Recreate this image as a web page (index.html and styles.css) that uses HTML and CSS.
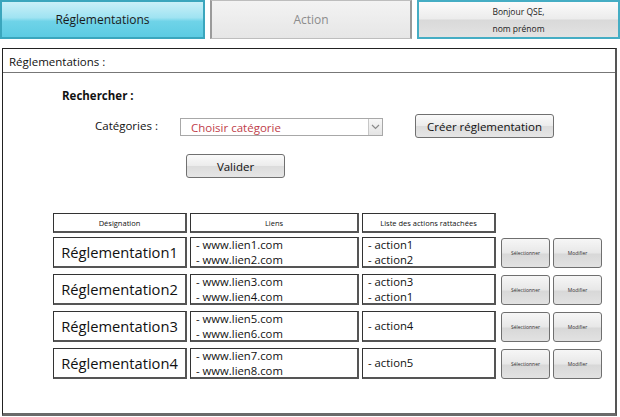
FILE: index.html
```html
<!DOCTYPE html>
<html lang="fr">
<head>
<meta charset="utf-8">
<link rel="stylesheet" href="styles.css">
</head>
<body>
<nav class="tabs">
  <div class="tab tab-active">Réglementations</div>
  <div class="tab tab-off">Action</div>
  <div class="tab tab-user">Bonjour QSE,<br>nom prénom</div>
</nav>
<main class="panel">
  <div class="panel-title">Réglementations :</div>
  <section class="search">
    <div class="search-title">Rechercher :</div>
    <div class="cat-row">
      <span class="cat-label">Catégories :</span>
      <div class="select">
        <span class="select-text">Choisir catégorie</span>
        <span class="select-arrow"><svg width="9" height="6" viewBox="0 0 9 6"><path d="M1 1 L4.5 4.5 L8 1" fill="none" stroke="#8a8a8a" stroke-width="1.2"/></svg></span>
      </div>
      <div class="btn btn-create">Créer réglementation</div>
    </div>
    <div class="btn btn-valider">Valider</div>
  </section>
  <section class="table">
    <div class="row head">
      <div class="cell c1">Désignation</div>
      <div class="cell c2">Liens</div>
      <div class="cell c3">Liste des actions rattachées</div>
    </div>
    <div class="row">
      <div class="cell c1 name">Réglementation1</div>
      <div class="cell c2 list"><span>- www.lien1.com</span><span>- www.lien2.com</span></div>
      <div class="cell c3 list"><span>- action1</span><span>- action2</span></div>
      <div class="sbtn first">Sélectionner</div><div class="sbtn">Modifier</div>
    </div>
    <div class="row">
      <div class="cell c1 name">Réglementation2</div>
      <div class="cell c2 list"><span>- www.lien3.com</span><span>- www.lien4.com</span></div>
      <div class="cell c3 list"><span>- action3</span><span>- action1</span></div>
      <div class="sbtn first">Sélectionner</div><div class="sbtn">Modifier</div>
    </div>
    <div class="row">
      <div class="cell c1 name">Réglementation3</div>
      <div class="cell c2 list"><span>- www.lien5.com</span><span>- www.lien6.com</span></div>
      <div class="cell c3 list"><span>- action4</span></div>
      <div class="sbtn first">Sélectionner</div><div class="sbtn">Modifier</div>
    </div>
    <div class="row">
      <div class="cell c1 name">Réglementation4</div>
      <div class="cell c2 list"><span>- www.lien7.com</span><span>- www.lien8.com</span></div>
      <div class="cell c3 list"><span>- action5</span></div>
      <div class="sbtn first">Sélectionner</div><div class="sbtn">Modifier</div>
    </div>
  </section>
</main>
</body>
</html>
```

FILE: styles.css
```css
* { box-sizing: border-box; }
html, body { margin: 0; padding: 0; background: #fff; }
body {
  font-family: "Open Sans", "DejaVu Sans", sans-serif;
  color: #111;
  width: 620px;
  height: 417px;
  overflow: hidden;
}
.tabs {
  display: flex;
  gap: 5px;
  height: 39px;
}
.tab {
  display: flex;
  align-items: center;
  justify-content: center;
  text-align: center;
  height: 39px;
}
.tab-active {
  width: 205px;
  background: linear-gradient(#c9f0f8 0%, #9fe3f2 45%, #6fd3e8 55%, #5ccbe3 100%);
  border: 2px solid #3aa6bd;
  font-size: 12px;
  color: #1a1a1a;
}
.tab-off {
  width: 202px;
  background: linear-gradient(#f3f3f3, #e6e6e6);
  border: 1px solid #bdbdbd;
  border-left: 2px solid #9a9a9a;
  border-right: 2px solid #9a9a9a;
  font-size: 12px;
  color: #8c8c8c;
}
.tab-user {
  width: 203px;
  background: linear-gradient(#fbfbfb 0%, #ececec 48%, #d9d9d9 52%, #e3e3e3 100%);
  border: 2px solid #45adc4;
  font-size: 8.5px;
  line-height: 17px;
  color: #222;
}
.panel {
  margin: 9px 0 0 2px;
  width: 615px;
  height: 368px;
  border: 1px solid #222;
  border-bottom: 3px solid #6a6a6a;
  border-right: 2px solid #555;
}
.panel-title {
  height: 24px;
  border-bottom: 1px solid #777;
  font-size: 11.5px;
  padding: 5px 0 0 6px;
}
.search {
  padding: 15px 0 0 59px;
  display: flex;
  flex-direction: column;
}
.search-title {
  font-weight: bold;
  font-size: 11.5px;
}
.cat-row {
  display: flex;
  align-items: flex-start;
  margin-top: 7px;
  padding-left: 33px;
  height: 24px;
}
.cat-label {
  font-size: 11.5px;
  width: 85px;
  padding-top: 8px;
}
.select {
  width: 203px;
  height: 18px;
  border: 1px solid #a8a8a8;
  display: flex;
  align-items: center;
  justify-content: space-between;
  margin-top: 8px;
  background: #fff;
}
.select-text {
  color: #c0404a;
  font-size: 11.5px;
  padding-left: 10px;
}
.select-arrow {
  width: 14px;
  height: 16px;
  border-left: 1px solid #c7c7c7;
  background: linear-gradient(#f7f7f7, #e4e4e4);
  display: flex;
  align-items: center;
  justify-content: center;
}
.btn {
  border: 1px solid #707070;
  border-radius: 3px;
  background: linear-gradient(#fafafa 0%, #ececec 48%, #dcdcdc 52%, #e6e6e6 100%);
  font-size: 11.5px;
  display: flex;
  align-items: center;
  justify-content: center;
}
.btn-create {
  width: 139px;
  height: 24px;
  margin-left: 32px;
  margin-top: 4px;
}
.btn-valider {
  width: 99px;
  height: 24px;
  margin-left: 124px;
  margin-top: 20px;
}
.table {
  padding: 35px 0 0 50px;
  display: flex;
  flex-direction: column;
  gap: 6px;
}
.row {
  display: flex;
  gap: 3px;
  height: 31px;
}
.row.head {
  height: 20px;
  margin-bottom: -2px;
}
.cell {
  border: 1px solid #333;
  border-bottom: 2px solid #555;
  border-right: 2px solid #555;
  background: #fff;
}
.head .cell {
  font-size: 7.5px;
  display: flex;
  align-items: center;
  justify-content: center;
}
.c1 { width: 134px; }
.c2 { width: 169px; }
.c3 { width: 134px; }
.name {
  font-size: 14.7px;
  display: flex;
  align-items: center;
  justify-content: center;
  padding-bottom: 1px;
}
.list {
  display: flex;
  flex-direction: column;
  justify-content: center;
  font-size: 11.3px;
  line-height: 15.5px;
  padding-left: 5px;
}
.list span { display: block; height: 15.5px; }
.sbtn {
  width: 49px;
  height: 30px;
  margin-top: 1px;
  border: 1px solid #6f6f6f;
  border-radius: 3px;
  background: linear-gradient(#f6f6f6 0%, #e8e8e8 48%, #d8d8d8 55%, #e2e2e2 100%);
  font-size: 5px;
  display: flex;
  align-items: center;
  justify-content: center;
  color: #333;
}
.sbtn.first { margin-left: 2px; }
```
